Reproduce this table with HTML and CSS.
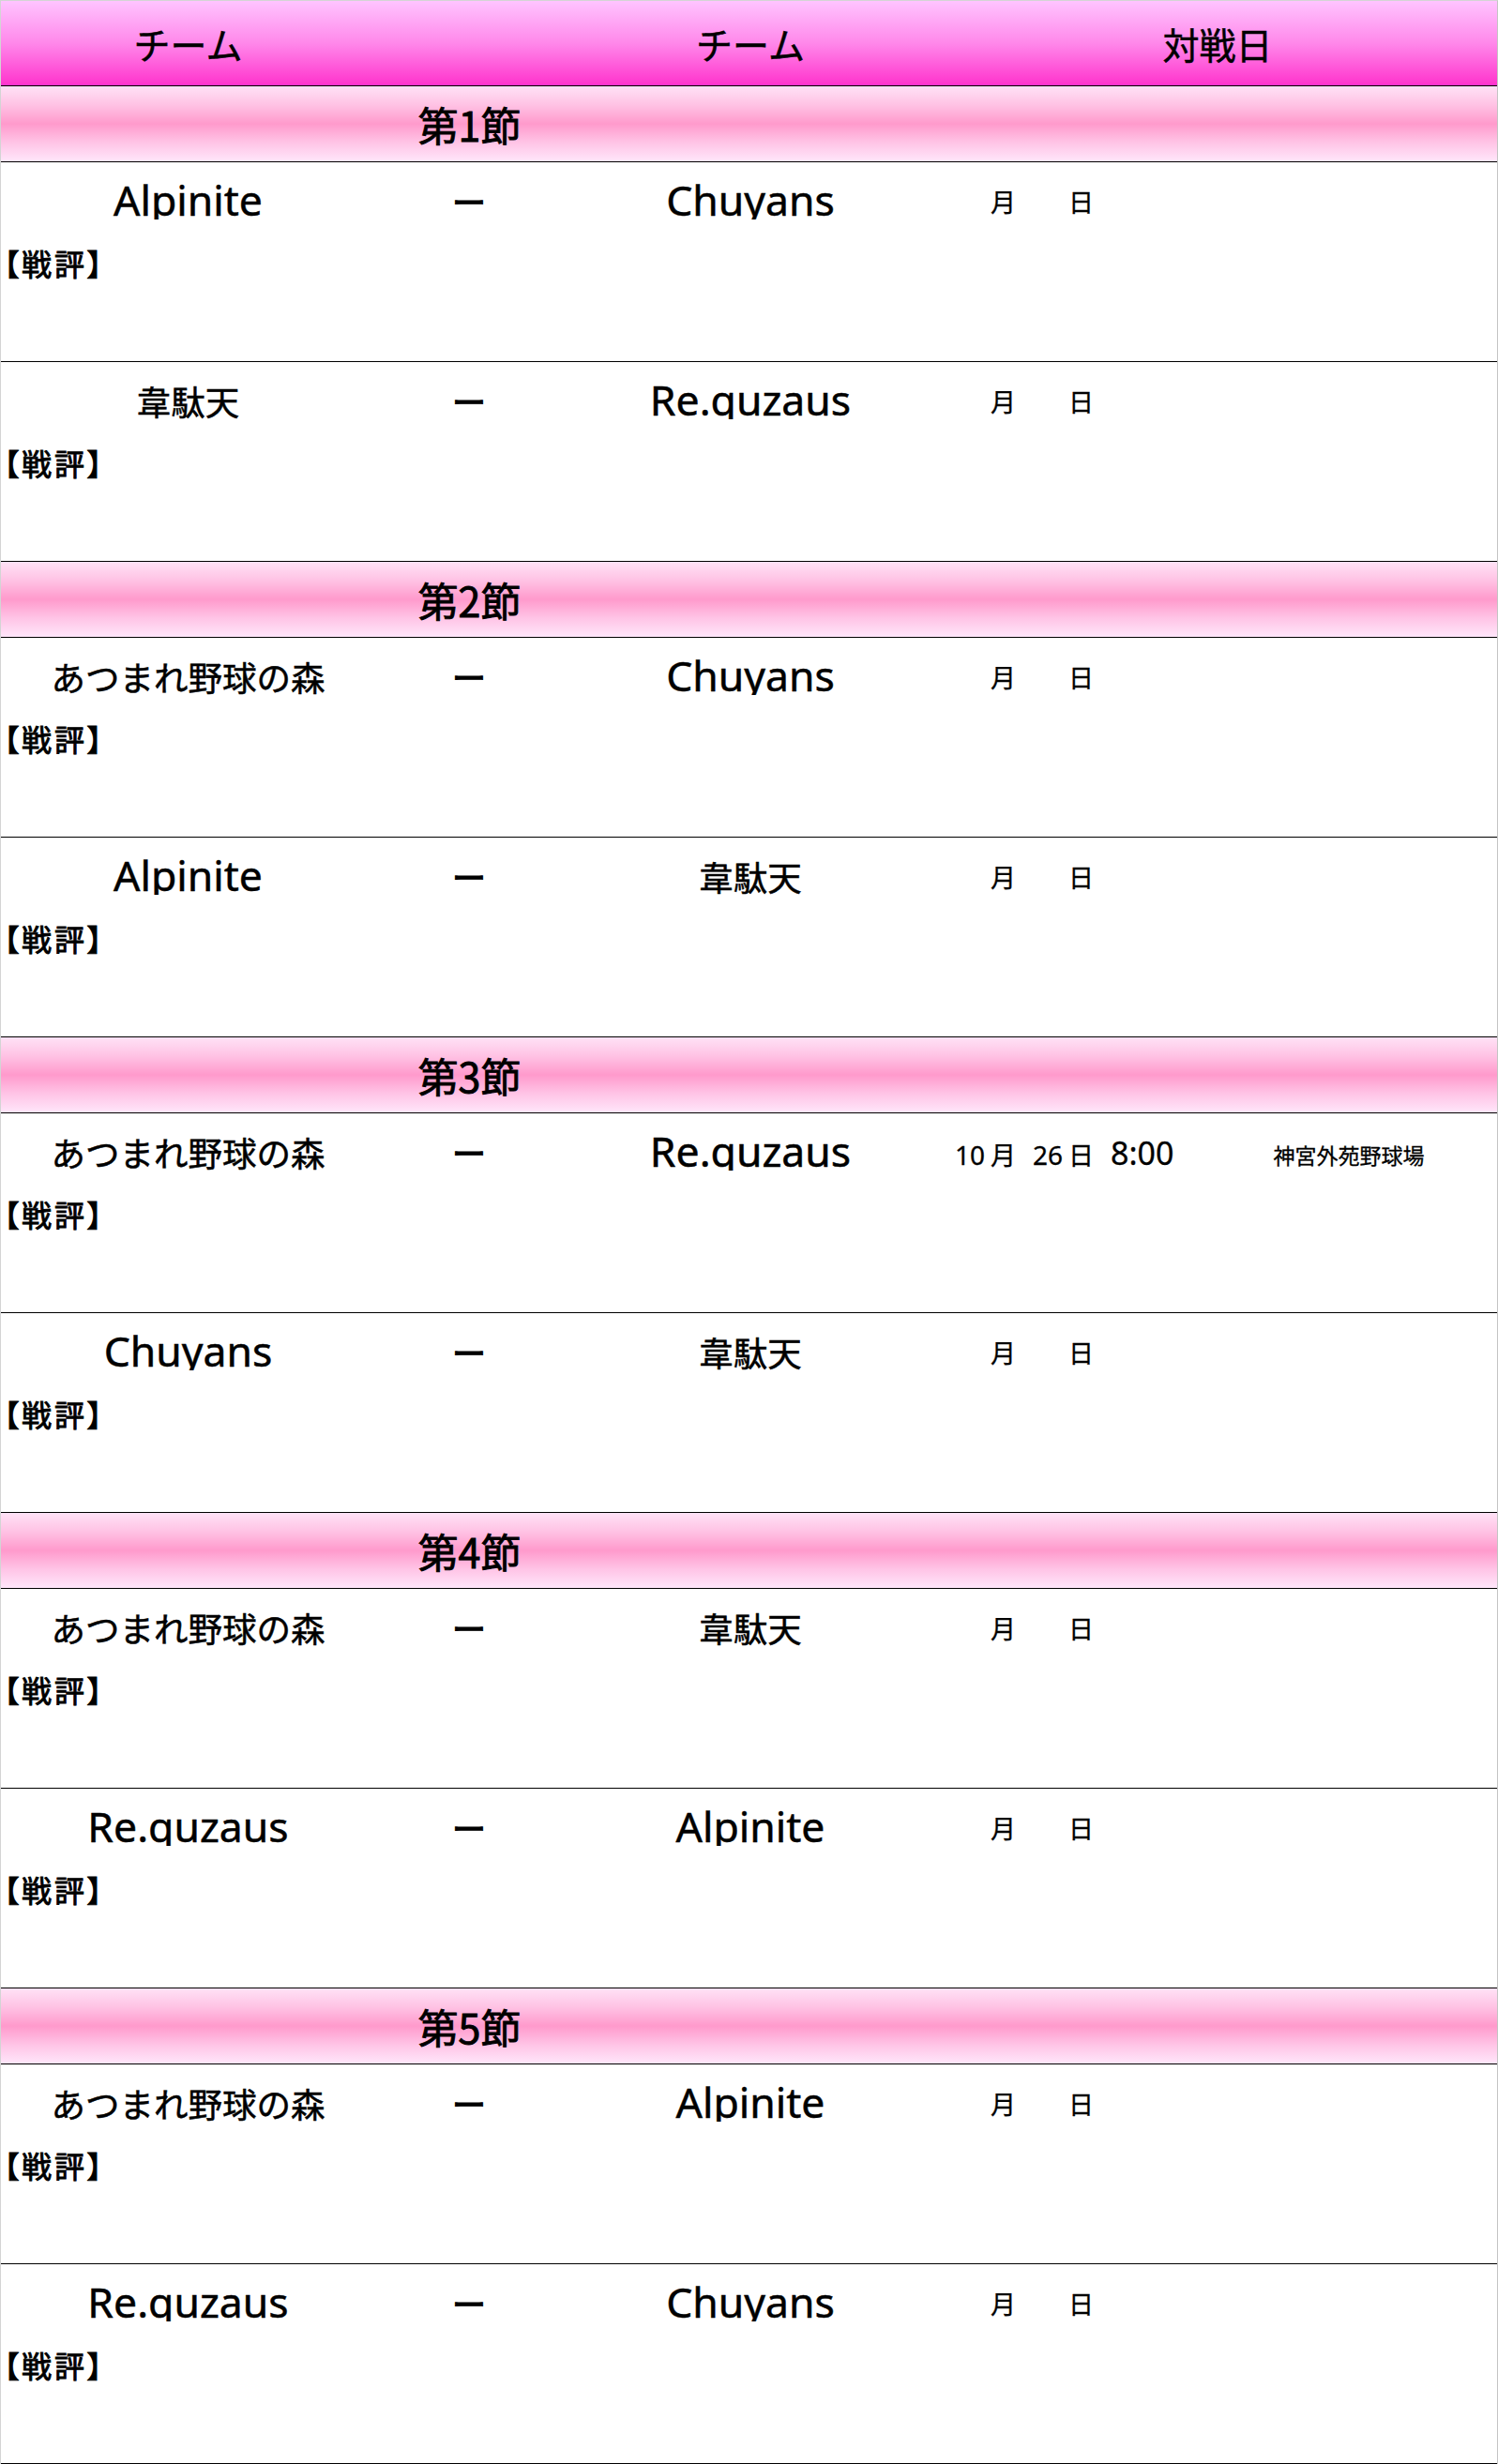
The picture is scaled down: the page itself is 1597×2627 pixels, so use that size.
FILE: index.html
```html
<!DOCTYPE html>
<html lang="ja">
<head>
<meta charset="utf-8">
<title>対戦表</title>
<link rel="stylesheet" href="styles.css">
</head>
<body>
<div class="sheet">
  <div class="head">
    <div class="h-cell">チーム</div>
    <div class="h-cell"></div>
    <div class="h-cell">チーム</div>
    <div class="h-cell">対戦日</div>
  </div>

  <div class="round"><div class="round-title">第1節</div></div>
  <div class="match">
    <div class="line">
      <div class="team"><span class="en">Alpinite</span></div>
      <div class="vs">ー</div>
      <div class="team"><span class="en">Chuyans</span></div>
      <div class="date"><span class="num"></span><span class="unit">月</span><span class="num"></span><span class="unit">日</span><span class="time"></span></div>
      <div class="venue"></div>
    </div>
    <div class="review">【戦評】</div>
  </div>
  <div class="match">
    <div class="line">
      <div class="team">韋駄天</div>
      <div class="vs">ー</div>
      <div class="team"><span class="en">Re.quzaus</span></div>
      <div class="date"><span class="num"></span><span class="unit">月</span><span class="num"></span><span class="unit">日</span><span class="time"></span></div>
      <div class="venue"></div>
    </div>
    <div class="review">【戦評】</div>
  </div>

  <div class="round"><div class="round-title">第2節</div></div>
  <div class="match">
    <div class="line">
      <div class="team">あつまれ野球の森</div>
      <div class="vs">ー</div>
      <div class="team"><span class="en">Chuyans</span></div>
      <div class="date"><span class="num"></span><span class="unit">月</span><span class="num"></span><span class="unit">日</span><span class="time"></span></div>
      <div class="venue"></div>
    </div>
    <div class="review">【戦評】</div>
  </div>
  <div class="match">
    <div class="line">
      <div class="team"><span class="en">Alpinite</span></div>
      <div class="vs">ー</div>
      <div class="team">韋駄天</div>
      <div class="date"><span class="num"></span><span class="unit">月</span><span class="num"></span><span class="unit">日</span><span class="time"></span></div>
      <div class="venue"></div>
    </div>
    <div class="review">【戦評】</div>
  </div>

  <div class="round"><div class="round-title">第3節</div></div>
  <div class="match">
    <div class="line">
      <div class="team">あつまれ野球の森</div>
      <div class="vs">ー</div>
      <div class="team"><span class="en">Re.quzaus</span></div>
      <div class="date"><span class="num">10</span><span class="unit">月</span><span class="num">26</span><span class="unit">日</span><span class="time">8:00</span></div>
      <div class="venue">神宮外苑野球場</div>
    </div>
    <div class="review">【戦評】</div>
  </div>
  <div class="match">
    <div class="line">
      <div class="team"><span class="en">Chuyans</span></div>
      <div class="vs">ー</div>
      <div class="team">韋駄天</div>
      <div class="date"><span class="num"></span><span class="unit">月</span><span class="num"></span><span class="unit">日</span><span class="time"></span></div>
      <div class="venue"></div>
    </div>
    <div class="review">【戦評】</div>
  </div>

  <div class="round"><div class="round-title">第4節</div></div>
  <div class="match">
    <div class="line">
      <div class="team">あつまれ野球の森</div>
      <div class="vs">ー</div>
      <div class="team">韋駄天</div>
      <div class="date"><span class="num"></span><span class="unit">月</span><span class="num"></span><span class="unit">日</span><span class="time"></span></div>
      <div class="venue"></div>
    </div>
    <div class="review">【戦評】</div>
  </div>
  <div class="match">
    <div class="line">
      <div class="team"><span class="en">Re.quzaus</span></div>
      <div class="vs">ー</div>
      <div class="team"><span class="en">Alpinite</span></div>
      <div class="date"><span class="num"></span><span class="unit">月</span><span class="num"></span><span class="unit">日</span><span class="time"></span></div>
      <div class="venue"></div>
    </div>
    <div class="review">【戦評】</div>
  </div>

  <div class="round"><div class="round-title">第5節</div></div>
  <div class="match">
    <div class="line">
      <div class="team">あつまれ野球の森</div>
      <div class="vs">ー</div>
      <div class="team"><span class="en">Alpinite</span></div>
      <div class="date"><span class="num"></span><span class="unit">月</span><span class="num"></span><span class="unit">日</span><span class="time"></span></div>
      <div class="venue"></div>
    </div>
    <div class="review">【戦評】</div>
  </div>
  <div class="match">
    <div class="line">
      <div class="team"><span class="en">Re.quzaus</span></div>
      <div class="vs">ー</div>
      <div class="team"><span class="en">Chuyans</span></div>
      <div class="date"><span class="num"></span><span class="unit">月</span><span class="num"></span><span class="unit">日</span><span class="time"></span></div>
      <div class="venue"></div>
    </div>
    <div class="review">【戦評】</div>
  </div>
</div>
</body>
</html>
```

FILE: styles.css
```css
html, body {
  margin: 0;
  padding: 0;
  background: #ffffff;
}

.sheet {
  width: 1597px;
  box-sizing: border-box;
  border-top: 1px solid #d4d4d4;
  border-left: 1px solid #d4d4d4;
  border-right: 1px solid #c4c4c4;
  font-family: "Noto Sans CJK JP", "Noto Sans", sans-serif;
  color: #000;
  -webkit-text-stroke: 0.5px #000;
}

.head {
  height: 90px;
  display: grid;
  grid-template-columns: 399px 200px 400px 1fr;
  align-items: center;
  background: linear-gradient(to bottom, #ffc4ff 0%, #ff88ea 50%, #ff33cc 100%);
  border-bottom: 1px solid #000;
}

.h-cell {
  text-align: center;
  font-size: 39px;
  line-height: 1;
}

.round {
  height: 80px;
  display: grid;
  grid-template-columns: 999px 1fr;
  align-items: center;
  background: linear-gradient(to bottom, #ffe2f6 0%, #ffc2e4 25%, #ff9acc 50%, #ffc4e6 75%, #ffe6fa 100%);
  border-bottom: 1px solid #000;
}

.round-title {
  text-align: center;
  font-size: 43px;
  line-height: 1;
  -webkit-text-stroke: 0.9px #000;
}

.match {
  height: 212px;
  border-bottom: 1px solid #000;
}

.line {
  height: 61px;
  overflow: hidden;
  display: grid;
  grid-template-columns: 399px 200px 400px 280px 1fr;
  align-items: start;
}

.team, .vs {
  padding-top: 12px;
  font-size: 36.5px;
  line-height: 60px;
  text-align: center;
  white-space: nowrap;
}

.vs {
  -webkit-text-stroke: 1px #000;
}

.en {
  font-family: "Noto Sans", sans-serif;
  font-size: 44.5px;
  line-height: 0;
}

.date {
  display: flex;
  align-items: baseline;
  padding-top: 22px;
  font-size: 27px;
  line-height: 40px;
  white-space: nowrap;
  -webkit-text-stroke: 0.3px #000;
}

.num {
  display: inline-block;
  width: 50px;
  text-align: right;
  font-family: "Noto Sans", sans-serif;
  font-size: 28px;
}

.unit {
  margin-left: 6px;
}

.time {
  margin-left: 18px;
  font-family: "Noto Sans", sans-serif;
  font-size: 34px;
}

.venue {
  padding-top: 24px;
  font-size: 23px;
  line-height: 40px;
  text-align: center;
  white-space: nowrap;
  -webkit-text-stroke: 0.3px #000;
}

.review {
  padding: 26px 0 0 3px;
  font-size: 32px;
  line-height: 40px;
  letter-spacing: 3px;
  font-feature-settings: "palt";
  -webkit-text-stroke: 0.9px #000;
}
```
